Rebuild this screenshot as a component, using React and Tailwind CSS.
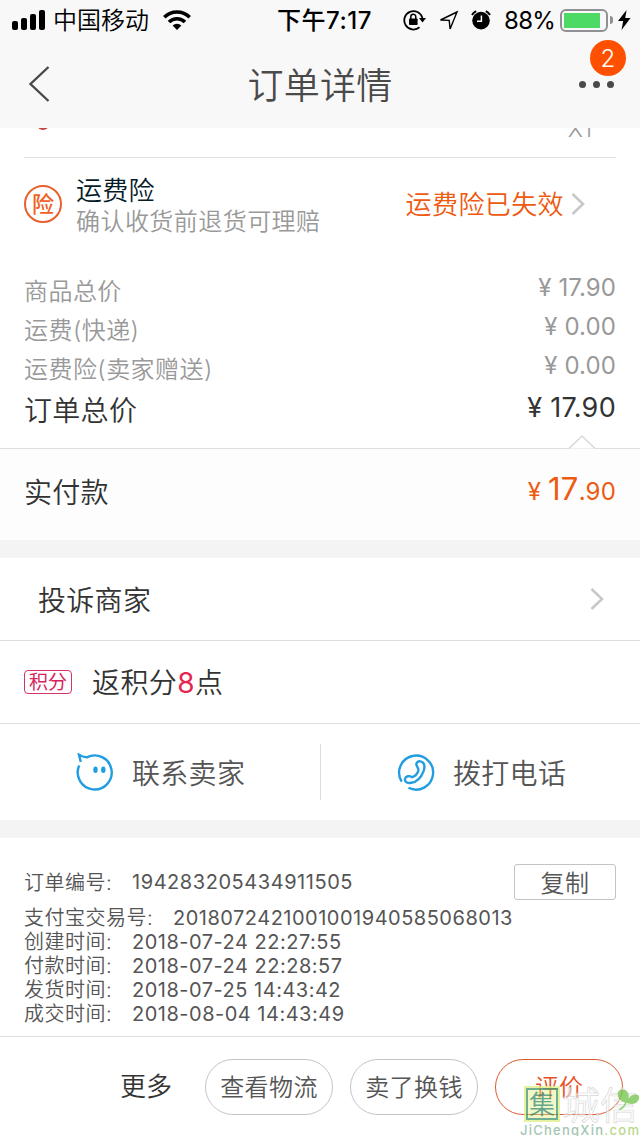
const prices = [
    {label: '商品总价', value: '17.90'},
    {label: '运费(快递)', value: '0.00'},
    {label: '运费险(卖家赠送)', value: '0.00'}
]

const orderInfo = [
    {label: '支付宝交易号:', value: '2018072421001001940585068013'},
    {label: '创建时间:', value: '2018-07-24 22:27:55'},
    {label: '付款时间:', value: '2018-07-24 22:28:57'},
    {label: '发货时间:', value: '2018-07-25 14:43:42'},
    {label: '成交时间:', value: '2018-08-04 14:43:49'}
]

const Chevron = ({className}) => (
    <svg className={className} width="14" height="24" viewBox="0 0 14 24" fill="none" stroke="#c8c8c8" strokeWidth="2.6">
        <path d="M1.5 2 12 12 1.5 22"/>
    </svg>
)

const StatusBar = () => (
    <div className="flex h-10 items-center text-2xl leading-10 text-black">
        <svg className="ml-3" width="33" height="20" viewBox="0 0 33 20">
            <rect x="0" y="11" width="6" height="9" rx="2"/>
            <rect x="9" y="8" width="6" height="12" rx="2"/>
            <rect x="18" y="4" width="6" height="16" rx="2"/>
            <rect x="27" y="0" width="6" height="20" rx="2"/>
        </svg>
        <span className="ml-2 pt-[2px]">中国移动</span>
        <svg className="ml-[14px]" width="28" height="20" viewBox="0 0 28 20" fill="none" stroke="#000" strokeWidth="3.6">
            <path d="M1.3 7.3a18 18 0 0 1 25.4 0"/>
            <path d="M6 12a11.3 11.3 0 0 1 16 0"/>
            <path d="M14 20l-4.4-4.4a6.2 6.2 0 0 1 8.8 0z" fill="#000" stroke="none"/>
        </svg>
        <span className="ml-[86px] w-24 whitespace-nowrap pt-[2px] font-medium tracking-[0.5px]">下午7:17</span>
        <svg className="ml-[30px]" width="24" height="22" viewBox="0 0 24 22">
            <path d="M16.5 18.3A9.2 9.2 0 1 1 19.4 9" fill="none" stroke="#000" strokeWidth="1.8"/>
            <path d="M16 9h7l-3.5 4.6z"/>
            <rect x="6" y="9.5" width="8.6" height="6.5" rx="0.8"/>
            <path d="M7.8 10V7.7a2.5 2.5 0 0 1 5 0V10" fill="none" stroke="#000" strokeWidth="1.5"/>
        </svg>
        <svg className="ml-3" width="20" height="20" viewBox="0 0 20 20" fill="none" stroke="#000" strokeWidth="1.4">
            <path d="M18 2 1.5 10l8.7.4.9 8.6z" strokeLinejoin="miter"/>
        </svg>
        <svg className="ml-[12px]" width="20" height="20" viewBox="0 0 20 20">
            <circle cx="10" cy="10.6" r="8.8"/>
            <path d="M1 5a9 9 0 0 1 4.2-3.8M19 5a9 9 0 0 0-4.2-3.8" fill="none" stroke="#000" strokeWidth="2"/>
            <path d="M10.4 5.5v5.7H6" fill="none" stroke="#fff" strokeWidth="1.5"/>
        </svg>
        <span className="ml-[13px] w-[51px] whitespace-nowrap pt-[2px] font-normal tracking-[-0.7px]">88%</span>
        <div className="ml-[5px] h-[23px] w-12 rounded-md border-2 border-[#8f8f94] p-[2px]">
            <div className="h-[15px] w-9 bg-[#4cd964]"/>
        </div>
        <div className="ml-[2px] h-2 w-[3px] rounded-r-full bg-[#8f8f94]"/>
        <svg className="ml-[5px]" width="13" height="20" viewBox="0 0 13 20">
            <path d="M8.6 0 0 11h5.2L3.5 20 12.5 8H7.2z"/>
        </svg>
    </div>
)

const Header = () => (
    <div className="flex h-[88px] items-center justify-between text-[#4a4a4a]">
        <svg className="ml-7 w-24" width="96" height="38" viewBox="0 0 96 38" fill="none" stroke="#4a4a4a" strokeWidth="2.4">
            <path d="M20.5 2 2.5 19l18 17"/>
        </svg>
        <h1 className="pt-1 text-[36px] leading-[84px] tracking-[0.3px]">订单详情</h1>
        <div className="relative mr-[26px] flex w-[98px] justify-end gap-[7px]">
            <i className="size-[7px] rounded-full bg-[#4a4a4a]"/>
            <i className="size-[7px] rounded-full bg-[#4a4a4a]"/>
            <i className="size-[7px] rounded-full bg-[#4a4a4a]"/>
            <span
                className="absolute -top-[41px] left-[74px] size-9 rounded-full bg-[#ff5000] text-center text-2xl leading-[37px] text-white">2</span>
        </div>
    </div>
)

const InsuranceRow = () => (
    <div className="flex h-[92px] items-center pl-6">
        <span
            className="size-[38px] rounded-full border-2 border-[#e8602c] text-center text-[22px] font-medium leading-[35px] text-[#f0601e]">险</span>
        <div className="ml-[14px] flex-1 pt-1">
            <div className="text-[26px] leading-8 tracking-[0.2px] text-[#051b28]">运费险</div>
            <div className="text-2xl leading-[30px] tracking-[0.45px] text-[#999]">确认收货前退货可理赔</div>
        </div>
        <span className="pt-px text-[26px] tracking-[0.4px] text-[#ee5a10]">运费险已失效</span>
        <Chevron className="mr-[55px] ml-[7px]"/>
    </div>
)

const PriceRow = ({label, value}) => (
    <div className="flex h-[39px] justify-between text-2xl leading-[39px] tracking-[0.45px] text-[#999]">
        <span>{label}</span>
        <span className="-mt-1 font-normal tracking-[0.1px]">¥ {value}</span>
    </div>
)

const Watermark = () => (
    <div className="absolute top-[1088px] left-[520px] h-12 w-[120px] opacity-80">
        <div className="flex items-start">
            <span
                className="ml-[6px] size-8 border-2 border-[#4d9a74] bg-[#dcee7a]/50 text-center text-[26px] leading-[29px] text-[#3e8f70] outline-2 outline-[#dff08a]">集</span>
            <span
                className="ml-1 text-[38px] leading-[34px] text-white/70 [-webkit-text-stroke:0.7px_#d0d0d0]">城信</span>
        </div>
        <svg className="absolute top-0 left-[96px]" width="24" height="22" viewBox="0 0 24 22" fill="#79c653">
            <path d="M11 15C2 14-1 5 4 2c6-2 10 3 8.500 9C14 7 20 5 23 8c1 6-5 10-12 7z"/>
            <path d="M10 14c-1 4-3 6-7 8" fill="none" stroke="#79c653" strokeWidth="1.5"/>
        </svg>
        <div className="mt-px whitespace-nowrap text-[13px] font-medium leading-[14px] tracking-[1.25px] text-[#8bb8a0]">
            JiChengXin<span className="text-[#a8cf6c]">.com</span>
        </div>
    </div>
)

const App = () => {
    return (
        <div
            className="relative h-[1136px] w-[640px] overflow-hidden bg-white font-[350] text-[#333] [font-family:Inter,'Noto_Sans_CJK_SC',sans-serif]">
            <div className="h-32 bg-[#f8f8f8]">
                <StatusBar/>
                <Header/>
            </div>

            <div className="mx-6 flex h-[30px] items-start justify-between overflow-hidden border-b border-[#e0e0e0]">
                <i className="-mt-[10px] ml-[13px] size-3 rounded-full bg-[#c8403f]"/>
                <span className="-mt-[14px] mr-6 text-[23px] leading-[30px] text-[#999]">X1</span>
            </div>
            <InsuranceRow/>

            <div className="h-[198px] px-6 pt-[22px]">
                {prices.map(p => <PriceRow key={p.label} label={p.label} value={p.value}/>)}
                <div className="flex h-11 justify-between text-[28px] leading-[45px] tracking-[0.3px]">
                    <span>订单总价</span>
                    <span className="-mt-1 text-[27px] font-normal">¥ 17.90</span>
                </div>
            </div>

            <div className="relative flex h-[92px] items-center justify-between border-t border-[#dedede] bg-[#fdfdfd] px-6">
                <svg className="absolute -top-[14px] right-11" width="28" height="15" viewBox="0 0 28 15" fill="#fff"
                     stroke="#d8d8d8" strokeWidth="1.4">
                    <path d="M1 13.5 14 1l13 12.5"/>
                </svg>
                <span className="pb-[4px] text-[28px] tracking-[0.3px]">实付款</span>
                <span className="pb-[11px] text-2xl font-normal tracking-[0.2px] text-[#ee5a10]">¥ <span
                    className="text-[31px]">17</span>.90</span>
            </div>
            <div className="h-[18px] bg-[#f4f4f4]"/>

            <div className="flex h-[83px] items-center justify-between border-b border-[#dedede] pr-9 pl-[38px]">
                <span className="pt-[3px] text-[28px] tracking-[0.3px]">投诉商家</span>
                <Chevron/>
            </div>
            <div className="flex h-[83px] items-center border-b border-[#dedede] pl-6">
                <span
                    className="h-6 w-12 rounded border border-[#d6336a] text-center text-[19px] font-normal leading-[24px] text-[#d81e5b]">积分</span>
                <span className="ml-[20px] pt-[2px] text-[28px] tracking-[0.4px]">返积分<span
                    className="font-normal text-[#e5264f]">8</span>点</span>
            </div>

            <div className="flex h-24 items-center text-[28px] tracking-[0.3px] text-[#555]">
                <button className="flex h-14 w-[321px] items-center border-r border-[#dedede] pl-[76px]">
                    <svg width="38" height="38" viewBox="0 0 38 38" fill="none" stroke="#219de2" strokeWidth="2.4">
                        <path d="M3.2 12.5A17 17 0 1 0 10.8 4.4Q6.5 4 3 1.8L4.8 9"/>
                        <ellipse cx="19.5" cy="16.7" rx="2.2" ry="3.2" fill="#219de2" stroke="none"/>
                        <ellipse cx="27.3" cy="16.7" rx="2.2" ry="3.2" fill="#219de2" stroke="none"/>
                    </svg>
                    <span className="ml-[18px] pt-[3px]">联系卖家</span>
                </button>
                <button className="flex items-center pl-[76px]">
                    <svg width="38" height="38" viewBox="0 0 38 38" fill="none" stroke="#219de2" strokeWidth="2.4">
                        <path d="M4.7 28.600A17 17 0 1 1 11.5 34.8"/>
                        <path
                            d="M20.3 13.8c-2.2-3.2 0-5.9 3.2-5.4 4.4.8 4.6 5.6 3 9.9-2.4 6.2-7 10.7-12.3 11.5-3.7.6-6.8-.9-6.2-3.8.7-3.2 4.4-3.6 7.2-1.8 3.4-1.2 5-3.2 6.1-6.4.4-1.4-.2-2.7-1-4z"/>
                    </svg>
                    <span className="ml-[18px] pt-[3px]">拨打电话</span>
                </button>
            </div>
            <div className="h-[18px] bg-[#f4f4f4]"/>

            <div className="h-[198px] px-6 pt-[26px] text-xl tracking-[0.5px] text-[#555]">
                <div className="flex h-9 items-center">
                    <span className="w-[108px] pt-px">订单编号:</span>
                    <span className="flex-1 font-normal tracking-[0.55px]">194283205434911505</span>
                    <button
                        className="h-9 w-[102px] rounded-[3px] border border-[#c4c4c4] text-2xl leading-[37px]">复制
                    </button>
                </div>
                <div className="mt-[6px]">
                    {orderInfo.map((row, i) => (
                        <div key={row.label} className="flex h-6 leading-[25px]">
                            <span className={i === 0 ? 'w-[149px]' : 'w-[108px]'}>{row.label}</span>
                            <span className="font-normal">{row.value}</span>
                        </div>
                    ))}
                </div>
            </div>

            <div className="flex h-[100px] items-center gap-[17px] border-t border-[#dedede] pl-[120px] text-2xl text-[#555]">
                <span className="mr-4 pt-[2px] text-[26px] text-[#333]">更多</span>
                <button className="h-14 w-32 rounded-full border border-[#c4c4c4] pt-[2px] tracking-[0.4px]">查看物流</button>
                <button className="h-14 w-32 rounded-full border border-[#c4c4c4] pt-[2px] tracking-[0.4px]">卖了换钱</button>
                <button className="h-14 w-32 rounded-full border border-[#dc5a30] pt-[2px] text-[#e8501e]">评价</button>
            </div>
            <Watermark/>
        </div>
    )
}

export default App
